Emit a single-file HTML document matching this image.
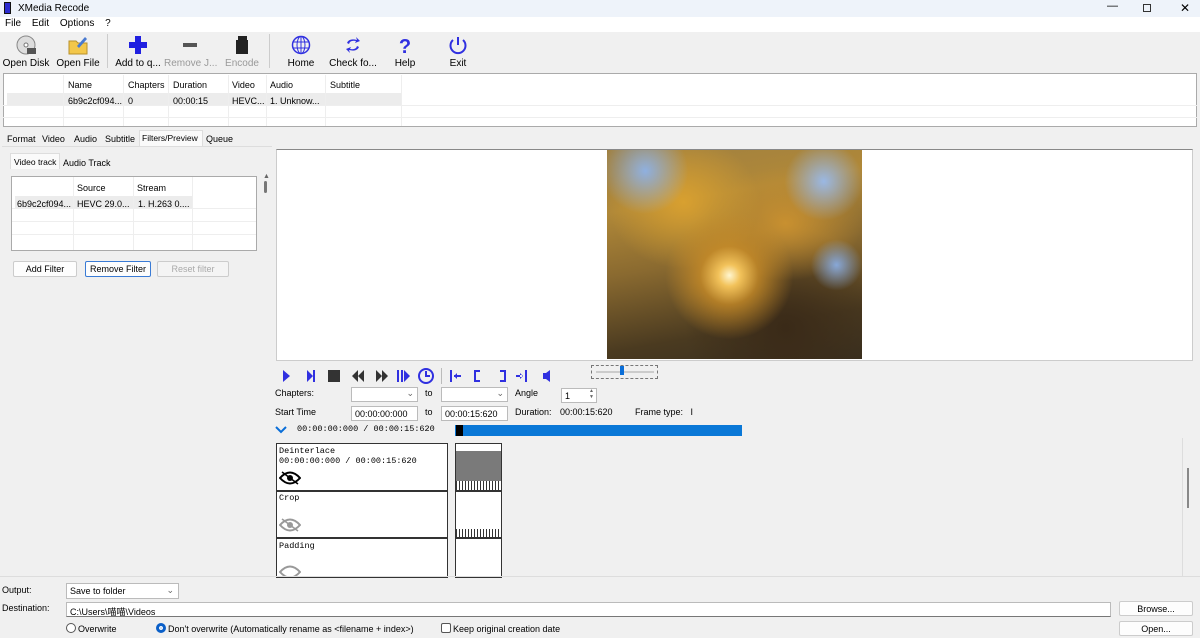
<!DOCTYPE html>
<html><head><meta charset="utf-8"><style>
*{box-sizing:border-box;margin:0;padding:0;white-space:nowrap}
body{width:1200px;height:638px;overflow:hidden;background:#f0f0f0;font-family:"Liberation Sans","Noto Sans CJK SC",sans-serif;font-size:9px;color:#000;position:relative}
.a{position:absolute}
.mono{font-family:"Liberation Mono",monospace}
.tb{position:absolute;top:34px;text-align:center;font-size:10px}
.tb svg{display:block;margin:0 auto 2px}
.inp{position:absolute;background:#fff;border:1px solid #bbb;height:15px;font-size:9px;padding:2px 3px}
.btn{position:absolute;background:#fdfdfd;border:1px solid #ccc;border-radius:2px;text-align:center;font-size:9px;line-height:14px;height:16px}
</style></head><body>
<div class="a" style="left:0;top:0;width:1200px;height:17px;background:#eef3fa"></div>
<div class="a" style="left:4px;top:2px;width:7px;height:12px;background:#2b2bd0;border:1px solid #111"></div>
<div class="a" style="left:18px;top:3px;font-size:10px">XMedia Recode</div>
<div class="a" style="left:1107px;top:0;font-size:11px">—</div>
<div class="a" style="left:1143px;top:1px;width:8px;height:8px;border:1px solid #333;margin-top:3px"></div>
<div class="a" style="left:1180px;top:1px;font-size:12px">✕</div>
<div class="a" style="left:0;top:17px;width:1200px;height:15px;background:#fff"></div>
<div class="a" style="left:5px;top:18px;font-size:10px;word-spacing:8px">File Edit Options ?</div>

<div class="tb" style="left:2px;width:48px"><svg width="22" height="22"><circle cx="11" cy="11" r="9" fill="#ddd" stroke="#888"/><circle cx="11" cy="11" r="2" fill="#fff" stroke="#777"/><rect x="12" y="14" width="9" height="6" fill="#555"/></svg>Open Disk</div>
<div class="tb" style="left:56px;width:44px"><svg width="22" height="22"><path d="M2 7h7l2 2h9v11H2z" fill="#f3c74a" stroke="#b8912a"/><path d="M10 12l8-9 2 2-8 9z" fill="#4a7ad0"/></svg>Open File</div>
<div class="a" style="left:107px;top:34px;width:1px;height:34px;background:#ccc"></div>
<div class="tb" style="left:112px;width:52px"><svg width="22" height="22"><path d="M8 2h6v6h6v6h-6v6H8v-6H2V8h6z" fill="#2020e0"/></svg>Add to q...</div>
<div class="tb" style="left:164px;width:52px;color:#999"><svg width="22" height="22"><rect x="4" y="9" width="14" height="4" fill="#555"/></svg>Remove J...</div>
<div class="tb" style="left:222px;width:40px;color:#999"><svg width="22" height="22"><rect x="5" y="6" width="12" height="14" fill="#222"/><rect x="7" y="2" width="9" height="4" fill="#222"/></svg>Encode</div>
<div class="a" style="left:269px;top:34px;width:1px;height:34px;background:#ccc"></div>
<div class="tb" style="left:282px;width:38px"><svg width="22" height="22"><circle cx="11" cy="11" r="8.5" fill="none" stroke="#3030e0" stroke-width="1.5"/><ellipse cx="11" cy="11" rx="4" ry="8.5" fill="none" stroke="#3030e0"/><path d="M3 8h16M3 14h16M11 2v18" stroke="#3030e0"/></svg>Home</div>
<div class="tb" style="left:328px;width:50px"><svg width="22" height="22"><path d="M5 9q2-5 10-3l-1-3 4 4-5 2 1-2q-6-1-7 3zM17 13q-2 5-10 3l1 3-4-4 5-2-1 2q6 1 7-3z" fill="#3030e0"/></svg>Check fo...</div>
<div class="tb" style="left:390px;width:30px"><svg width="22" height="22"><text x="11" y="19" text-anchor="middle" font-size="20" font-weight="bold" fill="#3030e0" font-family="Liberation Sans">?</text></svg>Help</div>
<div class="tb" style="left:444px;width:28px"><svg width="22" height="22"><path d="M6 6a7.5 7.5 0 1 0 10 0" fill="none" stroke="#3030e0" stroke-width="2"/><path d="M11 3v8" stroke="#3030e0" stroke-width="2"/></svg>Exit</div>

<div class="a" style="left:3px;top:73px;width:1194px;height:54px;background:#fff;border:1px solid #aaa"></div>
<div class="a" style="left:7px;top:93px;width:394px;height:12px;background:#ececec"></div>
<div class="a" style="left:3px;top:105px;width:1194px;height:1px;background:#eee"></div>
<div class="a" style="left:3px;top:117px;width:1194px;height:1px;background:#eee"></div>
<div class="a" style="left:63px;top:75px;width:1px;height:51px;background:#eee"></div>
<div class="a" style="left:123px;top:75px;width:1px;height:51px;background:#eee"></div>
<div class="a" style="left:168px;top:75px;width:1px;height:51px;background:#eee"></div>
<div class="a" style="left:228px;top:75px;width:1px;height:51px;background:#eee"></div>
<div class="a" style="left:266px;top:75px;width:1px;height:51px;background:#eee"></div>
<div class="a" style="left:325px;top:75px;width:1px;height:51px;background:#eee"></div>
<div class="a" style="left:401px;top:75px;width:1px;height:51px;background:#eee"></div>
<div class="a" style="top:80px;left:68px">Name</div><div class="a" style="top:80px;left:128px">Chapters</div><div class="a" style="top:80px;left:173px">Duration</div><div class="a" style="top:80px;left:232px">Video</div><div class="a" style="top:80px;left:270px">Audio</div><div class="a" style="top:80px;left:330px">Subtitle</div>
<div class="a" style="top:96px;left:68px">6b9c2cf094...</div><div class="a" style="top:96px;left:128px">0</div><div class="a" style="top:96px;left:173px">00:00:15</div><div class="a" style="top:96px;left:232px">HEVC...</div><div class="a" style="top:96px;left:270px">1. Unknow...</div>

<div class="a" style="top:134px;left:7px">Format</div><div class="a" style="top:134px;left:42px">Video</div><div class="a" style="top:134px;left:74px">Audio</div><div class="a" style="top:134px;left:105px">Subtitle</div>
<div class="a" style="top:130px;left:139px;width:64px;height:16px;background:#fafafa;border:1px solid #ddd;border-bottom:none;padding:2px 2px;font-size:8.5px">Filters/Preview</div>
<div class="a" style="top:134px;left:206px">Queue</div>
<div class="a" style="left:2px;top:146px;width:270px;height:430px;border-top:1px solid #ddd"></div>
<div class="a" style="top:153px;left:10px;width:50px;height:16px;background:#fafafa;border:1px solid #ddd;border-bottom:none;padding:3px 3px;font-size:8.5px">Video track</div>
<div class="a" style="top:158px;left:63px">Audio Track</div>
<div class="a" style="left:11px;top:176px;width:246px;height:75px;background:#fff;border:1px solid #aaa"></div>
<div class="a" style="left:15px;top:196px;width:177px;height:12px;background:#ececec"></div>
<div class="a" style="left:73px;top:177px;width:1px;height:73px;background:#eee"></div><div class="a" style="left:133px;top:177px;width:1px;height:73px;background:#eee"></div><div class="a" style="left:192px;top:177px;width:1px;height:73px;background:#eee"></div>
<div class="a" style="left:12px;top:208px;width:244px;height:1px;background:#eee"></div><div class="a" style="left:12px;top:221px;width:244px;height:1px;background:#eee"></div><div class="a" style="left:12px;top:234px;width:244px;height:1px;background:#eee"></div>
<div class="a" style="top:183px;left:77px">Source</div><div class="a" style="top:183px;left:137px">Stream</div>
<div class="a" style="top:199px;left:17px">6b9c2cf094...</div><div class="a" style="top:199px;left:77px">HEVC 29.0...</div><div class="a" style="top:199px;left:138px">1. H.263 0....</div>
<div class="a" style="left:263px;top:173px;font-size:7px;color:#666">▲</div>
<div class="a" style="left:264px;top:181px;width:3px;height:12px;background:#777;border-radius:2px"></div>
<div class="btn" style="left:13px;top:261px;width:64px">Add Filter</div>
<div class="btn" style="left:85px;top:261px;width:66px;border-color:#3a7bd5">Remove Filter</div>
<div class="btn" style="left:157px;top:261px;width:72px;color:#aaa;background:#f4f4f4">Reset filter</div>

<div class="a" style="left:276px;top:149px;width:917px;height:212px;background:#fff;border:1px solid #ccc;border-top:1px solid #888"></div>
<div class="a" style="left:607px;top:150px;width:255px;height:209px;background:radial-gradient(circle at 48% 60%,#fff6d0 0,#f2c25a 6%,rgba(200,140,40,.8) 16%,transparent 35%),radial-gradient(circle at 15% 10%,#8fb0e0 0,transparent 15%),radial-gradient(circle at 85% 15%,#9ab8e4 0,transparent 14%),radial-gradient(circle at 90% 55%,#88a8d8 0,transparent 10%),radial-gradient(ellipse at 30% 25%,#d8a030 0,transparent 30%),radial-gradient(ellipse at 70% 35%,#c89030 0,transparent 30%),radial-gradient(ellipse at 70% 85%,#3a2a18 0,transparent 40%),linear-gradient(170deg,#a08040 0,#b08838 25%,#8a6a30 50%,#4a3a20 80%,#3a3020 100%)"></div>

<svg class="a" style="left:280px;top:368px" width="280" height="16" fill="#3030e0">
<path d="M3 2l7 6-7 6z"/><path d="M27 2l6 6-6 6zM33 2h2v12h-2z"/><rect x="48" y="2" width="12" height="12" fill="#333"/>
<path d="M78 2l-6 6 6 6zM84 2l-6 6 6 6z" fill="#333"/><path d="M96 2l6 6-6 6zM102 2l6 6-6 6z" fill="#333"/>
<path d="M117 2h2v12h-2zM121 2h2v12h-2zM124 2l6 6-6 6z"/><circle cx="146" cy="8" r="7" fill="none" stroke="#3030e0" stroke-width="2"/><path d="M146 3v5h4" fill="none" stroke="#3030e0" stroke-width="2"/>
<rect x="161" y="0" width="1" height="16" fill="#bbb"/>
<path d="M170 2h2v12h-2zM174 7h7v2h-7zM174 8l3-3v6z"/><path d="M194 2h6v2h-4v8h4v2h-6z"/><path d="M220 2h6v12h-6v-2h4V4h-4z"/><path d="M236 7h7v2h-7zM243 8l-3-3v6zM245 2h2v12h-2z"/><path d="M263 5h3l4-3v12l-4-3h-3z"/>
</svg>
<div class="a" style="left:591px;top:365px;width:67px;height:14px;border:1px dashed #777"></div>
<div class="a" style="left:596px;top:371px;width:58px;height:2px;background:#ccc"></div>
<div class="a" style="left:620px;top:366px;width:4px;height:9px;background:#0a6ed8"></div>

<div class="a" style="left:275px;top:388px">Chapters:</div>
<div class="inp" style="left:351px;top:387px;width:67px"><span style="position:absolute;right:3px;top:0;color:#666">⌄</span></div>
<div class="a" style="left:425px;top:388px">to</div>
<div class="inp" style="left:441px;top:387px;width:67px"><span style="position:absolute;right:3px;top:0;color:#666">⌄</span></div>
<div class="a" style="left:515px;top:388px">Angle</div>
<div class="inp" style="left:561px;top:388px;width:36px">1<span style="position:absolute;right:2px;top:-1px;font-size:5px;color:#666;line-height:6px">▲<br>▼</span></div>
<div class="a" style="left:275px;top:407px">Start Time</div>
<div class="inp" style="left:351px;top:406px;width:67px">00:00:00:000</div>
<div class="a" style="left:425px;top:407px">to</div>
<div class="inp" style="left:441px;top:406px;width:67px">00:00:15:620</div>
<div class="a" style="left:515px;top:407px">Duration:</div>
<div class="a" style="left:560px;top:407px">00:00:15:620</div>
<div class="a" style="left:635px;top:407px">Frame type:&nbsp;&nbsp; I</div>
<svg class="a" style="left:275px;top:426px" width="12" height="8"><path d="M1 1l5 5 5-5" fill="none" stroke="#0a6ed8" stroke-width="2"/></svg>
<div class="a mono" style="left:297px;top:424px;font-size:8.5px">00:00:00:000 / 00:00:15:620</div>
<div class="a" style="left:455px;top:425px;width:287px;height:11px;background:#0a78d7"></div>
<div class="a" style="left:456px;top:425px;width:7px;height:11px;background:#000"></div>

<div class="a" style="left:276px;top:443px;width:172px;height:135px;background:#fff;border:1px solid #333"></div>
<div class="a" style="left:276px;top:490px;width:172px;height:2px;background:#333"></div>
<div class="a" style="left:276px;top:537px;width:172px;height:2px;background:#333"></div>
<div class="a mono" style="left:279px;top:446px;font-size:8.5px">Deinterlace<br>00:00:00:000 / 00:00:15:620</div>
<div class="a mono" style="left:279px;top:493px;font-size:8.5px">Crop</div>
<div class="a mono" style="left:279px;top:541px;font-size:8.5px">Padding</div>
<svg class="a" style="left:279px;top:471px" width="22" height="14"><path d="M1 7q10-11 20 0q-10 11-20 0z" fill="none" stroke="#000" stroke-width="2"/><circle cx="11" cy="7" r="3" fill="#000"/><path d="M3 1l16 12" stroke="#000" stroke-width="1.5"/></svg>
<svg class="a" style="left:279px;top:518px" width="22" height="14"><path d="M1 7q10-11 20 0q-10 11-20 0z" fill="none" stroke="#999" stroke-width="2"/><circle cx="11" cy="7" r="3" fill="#999"/><path d="M3 1l16 12" stroke="#999" stroke-width="1.5"/></svg>
<svg class="a" style="left:279px;top:565px" width="22" height="12"><path d="M1 7q10-11 20 0q-10 11-20 0z" fill="none" stroke="#999" stroke-width="2"/></svg>
<div class="a" style="left:455px;top:443px;width:47px;height:135px;background:#fff;border:1px solid #333"></div>
<div class="a" style="left:455px;top:490px;width:47px;height:2px;background:#333"></div>
<div class="a" style="left:455px;top:537px;width:47px;height:2px;background:#333"></div>
<div class="a" style="left:456px;top:451px;width:45px;height:30px;background:#7a7a7a"></div>
<div class="a" style="left:456px;top:481px;width:45px;height:9px;background:repeating-linear-gradient(90deg,#333 0 1px,#fff 1px 3px)"></div>
<div class="a" style="left:456px;top:529px;width:45px;height:8px;background:repeating-linear-gradient(90deg,#333 0 1px,#fff 1px 3px)"></div>
<div class="a" style="left:1182px;top:438px;width:1px;height:138px;background:#ddd"></div>
<div class="a" style="left:1187px;top:468px;width:2px;height:40px;background:#888"></div>
<div class="a" style="left:0;top:576px;width:1200px;height:1px;background:#ddd"></div>

<div class="a" style="left:2px;top:585px">Output:</div>
<div class="inp" style="left:66px;top:583px;width:113px;height:16px">Save to folder<span style="position:absolute;right:4px;top:1px;color:#666">⌄</span></div>
<div class="a" style="left:2px;top:603px">Destination:</div>
<div class="inp" style="left:66px;top:602px;width:1045px;border-bottom:1px solid #777">C:\Users\喵喵\Videos</div>
<div class="btn" style="left:1119px;top:601px;width:74px;height:15px">Browse...</div>
<div class="btn" style="left:1119px;top:621px;width:74px;height:15px">Open...</div>
<div class="a" style="left:66px;top:623px;width:10px;height:10px;border:1px solid #555;border-radius:50%;background:#fff"></div>
<div class="a" style="left:78px;top:624px">Overwrite</div>
<div class="a" style="left:156px;top:623px;width:10px;height:10px;border-radius:50%;background:#0a5fc8;border:3px solid #0a5fc8;box-shadow:inset 0 0 0 1.5px #fff"></div>
<div class="a" style="left:168px;top:624px">Don't overwrite (Automatically rename as &lt;filename + index&gt;)</div>
<div class="a" style="left:441px;top:623px;width:10px;height:10px;border:1px solid #555;border-radius:2px;background:#fff"></div>
<div class="a" style="left:453px;top:624px">Keep original creation date</div>
</body></html>
